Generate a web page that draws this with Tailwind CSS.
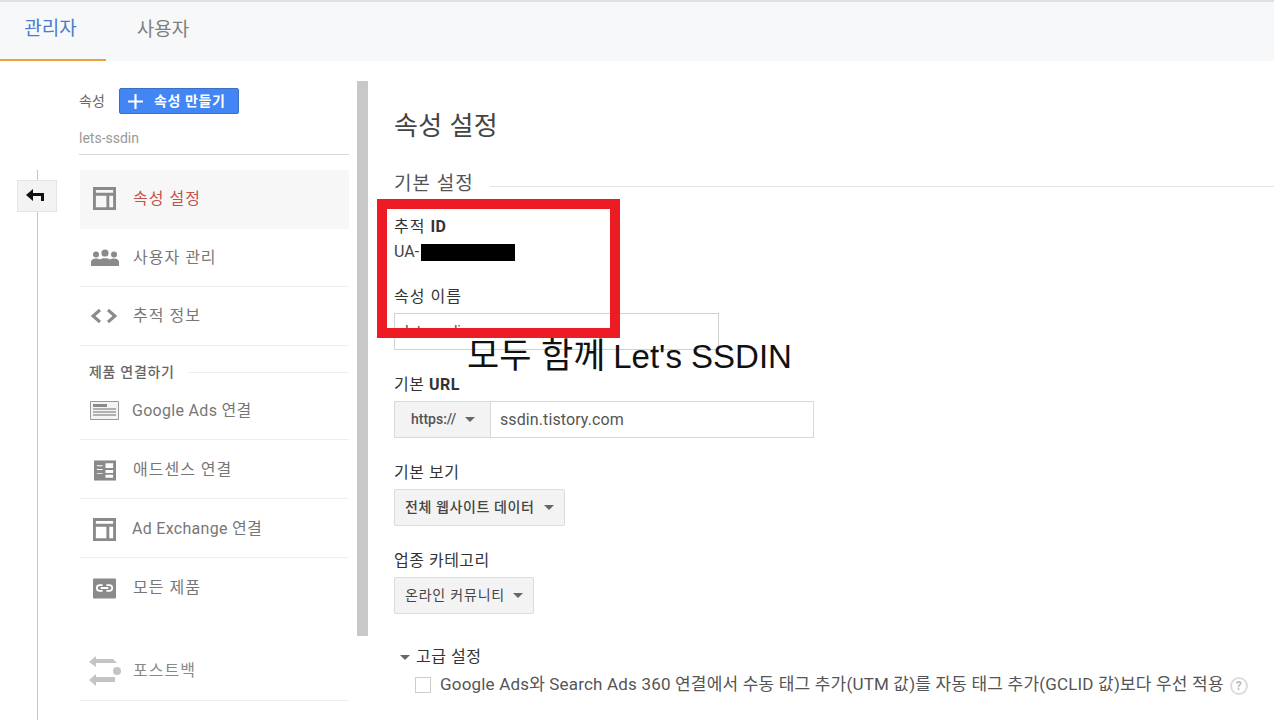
<!DOCTYPE html>
<html lang="ko">
<head>
  <meta charset="UTF-8">
  <title>속성 설정</title>
  <script src="https://cdn.jsdelivr.net/npm/@tailwindcss/browser@4"></script>
</head>
<body class="bg-white overflow-hidden h-[720px] font-['Roboto','Noto_Sans_CJK_KR',sans-serif] text-[#333]">

  <!-- Tabs -->
  <div class="flex h-[61px] bg-[#f7f8fa] border-t-2 border-[#dfe1e5]">
    <div class="w-[106px] h-[59px] border-b-2 border-[#e8a33d] flex items-center justify-center text-[19px] text-[#4a7bc8] pr-[5px] pb-[2px]">관리자</div>
    <div class="w-[110px] h-[59px] flex items-center justify-center text-[19px] text-[#808080] pl-[4px] pb-[2px]">사용자</div>
  </div>

  <div class="relative flex h-[659px]">
    <!-- Left rail -->
    <div class="relative w-[80px] shrink-0">
      <div class="absolute left-[37px] top-[109px] bottom-0 w-px bg-[#c4c4c4]"></div>
      <div class="absolute left-[17px] top-[119px] w-[40px] h-[32px] bg-[#f3f3f3] border border-[#e4e4e4] flex items-center justify-center pr-[5px]">
        <svg width="18" height="14" viewBox="0 0 18 14"><path d="M0 6l7-6v4h11v8h-3V7H7v5z" fill="#111"/></svg>
      </div>
    </div>

    <!-- Sidebar -->
    <div class="w-[269px] shrink-0 pt-[26px] text-[#777]">
      <div class="flex items-center h-[28px]">
        <span class="text-[14px] w-[40px] -ml-px text-[#666]">속성</span>
        <button class="flex items-center w-[120px] h-[26px] rounded-[2px] bg-[#4285f4] border border-[#3b6fc4] text-white text-[14px] font-bold tracking-[0.6px]">
          <svg class="ml-[7px] mr-[10px]" width="17" height="17" viewBox="0 0 16 16"><path d="M7 1h2v6h6v2H9v6H7V9H1V7h6z" fill="#fff"/></svg>속성 만들기
        </button>
      </div>
      <div class="h-[32px] mt-[8px] -ml-px border-b border-[#d8d8d8] text-[14px] text-[#999] flex items-center pb-[1px]">lets-ssdin</div>

      <div class="mt-[15px] h-[59px] bg-[#f7f7f7] flex items-center text-[#c6504a] pb-[2px]">
        <div class="w-[52px] flex justify-center pr-[3px]">
          <svg width="23" height="23" viewBox="0 0 24 24"><path d="M1.500 1.500h21v21h-21zM1.500 7.500h21M15.500 7.500v15" fill="none" stroke="#8a8a8a" stroke-width="3"/></svg>
        </div>
        <span class="text-[16px] tracking-[1px] pl-[1px]">속성 설정</span>
      </div>
      <div class="h-[58px] border-b border-[#eee] flex items-center">
        <div class="w-[52px] flex justify-center pr-[3px]">
          <svg width="28" height="18" viewBox="0 0 28 18" fill="#8a8a8a"><circle cx="14" cy="4" r="3.600"/><circle cx="5" cy="5.500" r="3"/><circle cx="23" cy="5.500" r="3"/><path d="M0 17v-4c0-2 2-3.500 5-3.500 1.500 0 3 .3 4 1 1.300-.8 3-1.200 5-1.200s3.700.4 5 1.200c1-.7 2.500-1 4-1 3 0 5 1.500 5 3.500v4z"/></svg>
        </div>
        <span class="text-[16px] tracking-[1px] pl-[1px]">사용자 관리</span>
      </div>
      <div class="h-[59px] border-b border-[#eee] flex items-center pb-[1px]">
        <div class="w-[52px] flex justify-center pr-[4px]">
          <svg width="26" height="16" viewBox="0 0 26 16"><path d="M9 2L2 8l7 6M17 2l7 6-7 6" fill="none" stroke="#8a8a8a" stroke-width="3"/></svg>
        </div>
        <span class="text-[16px] tracking-[1px] pl-[1px]">추적 정보</span>
      </div>

      <div class="flex items-center h-[28px] mt-[12px] pl-[9px]">
        <span class="text-[14px] font-medium text-[#666] tracking-[0.7px] whitespace-nowrap">제품 연결하기</span>
        <span class="flex-1 h-px bg-[#eee] ml-[14px]"></span>
      </div>
      <div class="h-[54px] border-b border-[#eee] flex items-center pb-[4px]">
        <div class="w-[52px] flex justify-center pr-[3px]">
          <svg width="29" height="19" viewBox="0 0 29 19"><path d="M.5.500h28v18H.5z" fill="#f4f4f4" stroke="#999"/><path d="M3 3h14v3H3z" fill="#8a8a8a"/><path d="M3 8h23M3 11h23M3 14h23" stroke="#999" stroke-width="1.500"/></svg>
        </div>
        <span class="text-[16px] tracking-[0.3px]">Google Ads 연결</span>
      </div>
      <div class="h-[59px] border-b border-[#eee] flex items-center pt-[2px]">
        <div class="w-[52px] flex justify-center pr-[3px]">
          <svg width="22" height="21" viewBox="0 0 23 21" fill="#8a8a8a"><path d="M0 0h23v21H0z"/><path d="M12 3h8v5h-8zM12 10h8v3h-8zM3 5h6v1H3zM3 9h6v1H3zM3 13h6v1H3zM12 15h8v3h-8z" fill="#fff"/></svg>
        </div>
        <span class="text-[16px] tracking-[1px] pl-[1px]">애드센스 연결</span>
      </div>
      <div class="h-[59px] border-b border-[#eee] flex items-center pt-[2px]">
        <div class="w-[52px] flex justify-center pr-[3px]">
          <svg width="23" height="23" viewBox="0 0 24 24"><path d="M1.500 1.500h21v21h-21zM1.500 7.500h21M15.500 7.500v15" fill="none" stroke="#8a8a8a" stroke-width="3"/></svg>
        </div>
        <span class="text-[16px] tracking-[0.3px]">Ad Exchange 연결</span>
      </div>
      <div class="h-[58px] flex items-center pt-[2px]">
        <div class="w-[52px] flex justify-center pr-[3px]">
          <svg width="23" height="21" viewBox="0 0 24 21"><rect width="24" height="21" rx="1" fill="#8a8a8a"/><path d="M10 7H7a3 3 0 000 6h3M14 7h3a3 3 0 010 6h-3M8 10h8" fill="none" stroke="#fff" stroke-width="2"/></svg>
        </div>
        <span class="text-[16px] tracking-[1px] pl-[1px]">모든 제품</span>
      </div>
      <div class="mt-[26px] h-[59px] border-b border-[#eee] flex items-center">
        <div class="w-[52px] flex justify-center pr-[3px]">
          <svg width="32" height="30" viewBox="0 0 32 30" fill="#c4c4c4"><path d="M0 6l7-6v3h17l4 4H7v4zM0 24l7-6v3h19v5H7v4z"/><circle cx="28" cy="15" r="4"/></svg>
        </div>
        <span class="text-[16px] tracking-[1px] pl-[1px] text-[#888]">포스트백</span>
      </div>
    </div>

    <!-- Scrollbar -->
    <div class="ml-[8px] mt-[20px] w-[11px] h-[555px] bg-[#c8c8c8] shrink-0"></div>

    <!-- Main -->
    <div class="flex-1 pl-[26px] min-w-0">
      <h1 class="text-[26px] leading-[32px] mt-[49px] tracking-[0.4px] font-normal text-[#444]">속성 설정</h1>
      <div class="flex items-center mt-[30px] h-[24px]">
        <span class="text-[19px] text-[#555] tracking-[1px] whitespace-nowrap">기본 설정</span>
        <span class="flex-1 h-px bg-[#e4e4e4] ml-[16px] mt-[4px]"></span>
      </div>

      <div class="text-[16px] leading-[20px] mt-[21px] tracking-[1px]">추적 <b class="font-bold tracking-[0.5px]">ID</b></div>
      <div class="flex items-center h-[20px] mt-[5px] text-[16px] text-[#444]">UA-<span class="w-[94px] h-[17px] bg-black ml-[2px]"></span></div>

      <div class="text-[16px] leading-[20px] mt-[25px] tracking-[1px]">속성 이름</div>
      <div class="w-[325px] h-[37px] mt-[6px] border border-[#d2d2d2] flex items-center px-[10px] text-[15px] text-[#555]">lets-ssdin</div>

      <div class="text-[16px] leading-[20px] mt-[25px] tracking-[0.5px]">기본 <b class="font-bold">URL</b></div>
      <div class="flex w-[420px] h-[37px] mt-[6px] border border-[#d9d9d9]">
        <div class="w-[96px] bg-[#f3f3f3] border-r border-[#d9d9d9] flex items-center pl-[16px] text-[14px] font-medium text-[#555]">https://
          <svg class="ml-[9px]" width="10" height="5" viewBox="0 0 10 5"><path d="M0 0h10L5 5z" fill="#666"/></svg>
        </div>
        <div class="flex-1 flex items-center pl-[9px] text-[16px] tracking-[0.1px] text-[#555]">ssdin.tistory.com</div>
      </div>

      <div class="text-[16px] leading-[20px] mt-[25px] tracking-[0.5px]">기본 보기</div>
      <div class="flex items-center w-[171px] h-[37px] mt-[6px] bg-[#f3f3f3] border border-[#dcdcdc] rounded-[2px] pl-[10px] text-[14px] font-medium tracking-[0.6px] text-[#444]">전체 웹사이트 데이터
        <svg class="ml-[10px]" width="10" height="5" viewBox="0 0 10 5"><path d="M0 0h10L5 5z" fill="#666"/></svg>
      </div>

      <div class="text-[16px] leading-[20px] mt-[25px] tracking-[0.5px]">업종 카테고리</div>
      <div class="flex items-center w-[140px] h-[37px] mt-[6px] bg-[#f3f3f3] border border-[#dcdcdc] rounded-[2px] pl-[10px] text-[14px] tracking-[0.8px] text-[#444]">온라인 커뮤니티
        <svg class="ml-[8px]" width="10" height="5" viewBox="0 0 10 5"><path d="M0 0h10L5 5z" fill="#666"/></svg>
      </div>

      <div class="flex items-center h-[20px] mt-[33px] pl-[6px] text-[16px] tracking-[0.5px]">
        <svg class="mr-[6px]" width="10" height="5" viewBox="0 0 10 5"><path d="M0 0h10L5 5z" fill="#666"/></svg>고급 설정
      </div>
      <div class="flex items-center h-[22px] mt-[7px] pl-[21px] text-[17px] tracking-[0.18px] text-[#555] whitespace-nowrap">
        <span class="w-[16px] h-[16px] border border-[#ccc] shrink-0 mr-[9px]"></span>
        Google Ads와 Search Ads 360 연결에서 수동 태그 추가(UTM 값)를 자동 태그 추가(GCLID 값)보다 우선 적용
        <span class="w-[18px] h-[18px] ml-[6px] mt-[2px] rounded-full border-2 border-[#ddd] text-[#bbb] text-[12px] font-bold flex items-center justify-center shrink-0">?</span>
      </div>
    </div>

    <!-- Annotations pasted on top of the screenshot -->
    <div class="absolute left-[377px] top-[138px] w-[243px] h-[139px] border-[10px] border-[#ed1c24]"></div>
    <div class="absolute left-[467px] top-[275px] text-[35px] leading-[40px] text-[#111] whitespace-nowrap font-['Liberation_Sans','Noto_Sans_CJK_KR',sans-serif]">모두 함께 <span class="text-[33px] -ml-[2px]">Let's SSDIN</span></div>
  </div>
</body>
</html>
